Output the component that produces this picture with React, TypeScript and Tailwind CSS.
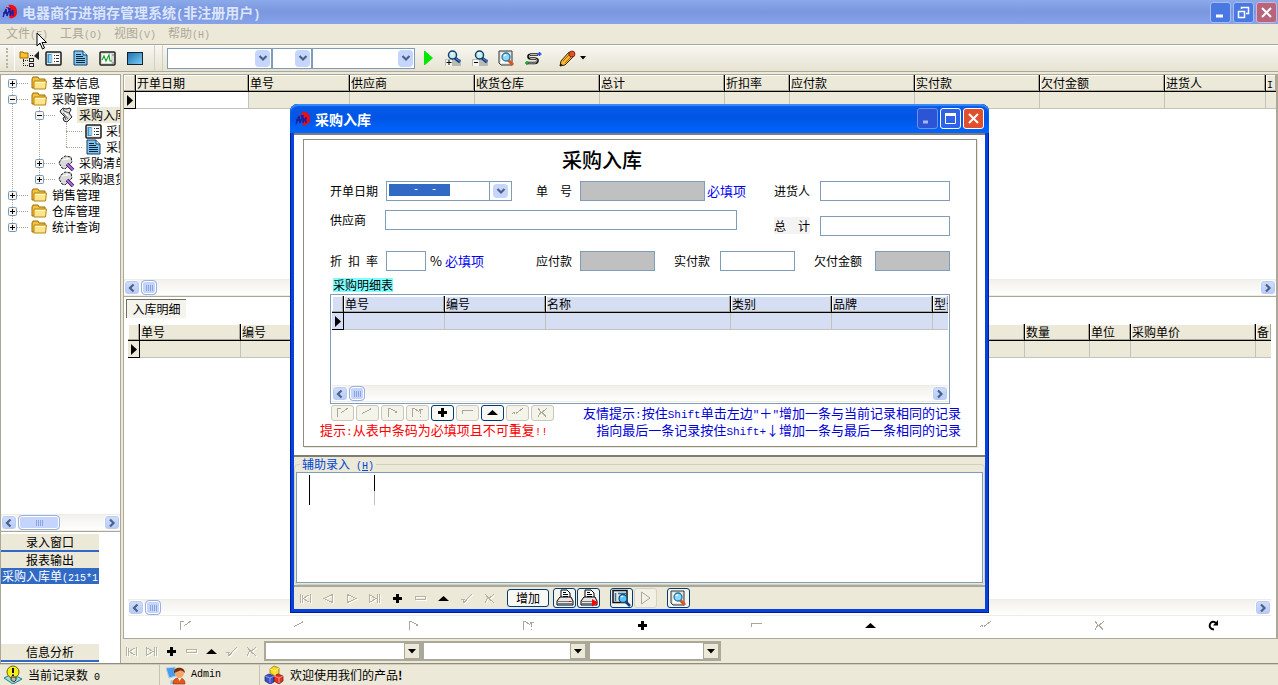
import type { ReactNode } from 'react'

type Column = { label: string; width?: number }
type NavKind = 'first' | 'prev' | 'next' | 'last' | 'add' | 'remove' | 'edit' | 'post' | 'cancel' | 'refresh'

const purchaseColumns: Column[] = [
  { label: '开单日期', width: 113 },
  { label: '单号', width: 101 },
  { label: '供应商', width: 125 },
  { label: '收货仓库', width: 125 },
  { label: '总计', width: 125 },
  { label: '折扣率', width: 65 },
  { label: '应付款', width: 125 },
  { label: '实付款', width: 125 },
  { label: '欠付金额', width: 125 },
  { label: '进货人', width: 101 },
  { label: 'I' },
]

const stockColumns: Column[] = [
  { label: '单号', width: 101 },
  { label: '编号', width: 101 },
  { label: '', width: 683 },
  { label: '数量', width: 65 },
  { label: '单位', width: 41 },
  { label: '采购单价', width: 125 },
  { label: '备' },
]

const detailColumns: Column[] = [
  { label: '单号', width: 101 },
  { label: '编号', width: 101 },
  { label: '名称', width: 185 },
  { label: '类别', width: 101 },
  { label: '品牌', width: 101 },
  { label: '型号' },
]

const navKinds: NavKind[] = ['first', 'prev', 'next', 'last', 'add', 'remove', 'edit', 'post', 'cancel']

const navLabels: Record<NavKind, string> = {
  first: 'First record',
  prev: 'Previous record',
  next: 'Next record',
  last: 'Last record',
  add: 'Insert record',
  remove: 'Delete record',
  edit: 'Edit record',
  post: 'Post edit',
  cancel: 'Cancel edit',
  refresh: 'Refresh',
}

const fullPaths: Record<string, string> = {
  first: 'M1.5 1v9M11.5 1v9M10.5 1.5L4 5.5l6.5 4M3.5 1.5v8',
  prev: 'M10.5 1.5v8L2 5.5z',
  next: 'M2.5 1.5v8L11 5.5z',
  last: 'M1.5 1.5v8L8 5.5zM9.5 1v9M11.5 1v9',
  remove: 'M1.5 3.5h10v3h-10z',
  post: 'M1 6.5h2l1 3L11.5 1.5M4 7l1-1',
  cancel: 'M2 1l3 3.5L2 9.5M11 1L6 5.5l5 4.5M5 4l2 3',
}

const thinPaths: Record<string, string> = {
  first: 'M1.5 9.5v-8h3M5 5.5l2-1 5-3.5',
  prev: 'M1.5 6.5L10.5 1.5',
  next: 'M2.5 9.5v-8h2l6 3.5M9 5.5h2',
  last: 'M1.5 9.5v-8h2l4 3 2-2.5h2M9.5 1.5v5M9.5 8.5v1.5',
  remove: 'M1.5 7v-4h10',
  post: 'M1 6.5l2-1 1 1M5 6.5L12 1',
  cancel: 'M2 1l3 4-3 5M11 1L6 5.5l4 4M7 7h1',
}

// single-width characters take half the advance of a CJK glyph
function Half({ children, size = 'text-[10px]' }: { children: ReactNode; size?: string }) {
  return <span className={`font-['Liberation_Mono',monospace] ${size} leading-none whitespace-pre`}>{children}</span>
}

function NavIcon({ kind, thin }: { kind: NavKind; thin?: boolean }) {
  if (kind === 'add') {
    return (
      <svg width="13" height="11" viewBox="0 0 13 11">
        <path d="M5 1h3v3h3v3H8v3H5V7H2V4h3z" fill="#000" />
      </svg>
    )
  }
  if (kind === 'edit') {
    return (
      <svg width="13" height="11" viewBox="0 0 13 11">
        <path d="M6.5 3L12 8H1z" fill="#000" />
      </svg>
    )
  }
  if (kind === 'refresh') {
    return (
      <svg width="13" height="12" viewBox="0 0 13 12" fill="none">
        <path d="M7 10.5C3 10 2 7.5 3 5s4-3 6-1" stroke="#000" strokeWidth="2" />
        <path d="M11 1v5.5H6z" fill="#000" />
      </svg>
    )
  }
  const d = thin ? thinPaths[kind] : fullPaths[kind]
  return (
    <svg width="13" height="11" viewBox="0 0 13 11" fill="none" shapeRendering="crispEdges">
      {!thin && <path d={d} stroke="#fff" transform="translate(1 1)" />}
      <path d={d} stroke={thin ? '#aca899' : '#b6b2a2'} />
    </svg>
  )
}

function AppIcon() {
  return (
    <svg width="16" height="16" viewBox="0 0 16 16" fill="none">
      <path d="M6 1c6-1 9 2 9 7s-4 7-8 6c3-1 5-4 4-7S8 2 6 1z" fill="#f00a12" />
      <path d="M7 2l4 0 2 5-3 6-3 1 2-6z" fill="#f01018" />
      <path d="M1 13l3-8 1 7 3-8v8l3-6v6M1 9h5M6 4l4 6" stroke="#1b1f9e" strokeWidth="1.4" />
      <path d="M4 3.5h3" stroke="#d02030" />
    </svg>
  )
}

function FormIcon() {
  return (
    <svg width="17" height="15" viewBox="0 0 17 15">
      <rect x="1" y="1" width="15" height="13" rx="1" fill="#e8e8e4" stroke="#1c1c1c" strokeWidth="1.5" />
      <path d="M2.5 3h4v9h-4z" fill="#3d95cf" />
      <path d="M4 4h2v7H4z" fill="#8fd2f5" />
      <path d="M8 3h6.5v9H8z" fill="#fff" />
      <path d="M9 4.5h1M11 4.5h3M9 7.5h1M11 7.5h3M9 10.5h1M11 10.5h3" stroke="#333" />
    </svg>
  )
}

function DocIcon() {
  return (
    <svg width="15" height="16" viewBox="0 0 15 16">
      <path d="M1 1h9l4 4v10H1z" fill="#7cc6f3" stroke="#123c66" />
      <path d="M10 1v4h4" fill="#d4efff" stroke="#123c66" />
      <path d="M3 4.5h5M3 6.5h7M3 8.5h9M3 10.5h9M3 12.5h9" stroke="#14232f" />
    </svg>
  )
}

function TreeIcon() {
  return (
    <svg width="21" height="17" viewBox="0 0 21 17" fill="none">
      <path d="M1 2h3l1 1h4v5H1z" fill="#fbc02d" stroke="#a06a00" />
      <path d="M4.5 9v7M4 10.5h5M11 5.5h3M6 15.5h3" stroke="#222" strokeDasharray="1 1" />
      <rect x="10.5" y="8.5" width="4" height="3" fill="#eee" stroke="#222" />
      <rect x="10.5" y="13.5" width="4" height="3" fill="#eee" stroke="#222" />
      <path d="M20 1l-5 5 5 4z" fill="#222" />
    </svg>
  )
}

function ChartIcon() {
  return (
    <svg width="17" height="15" viewBox="0 0 17 15" fill="none">
      <rect x="1" y="1" width="15" height="13" rx="1" fill="#d8d8d2" stroke="#222" strokeWidth="1.5" />
      <rect x="3" y="3" width="9" height="9" fill="#fff" />
      <path d="M3 9l2-4 2 5 3-6 1 6h2" stroke="#15a52a" strokeWidth="1.2" />
      <path d="M13.5 4h1M13.5 12h1" stroke="#222" />
    </svg>
  )
}

function ScreenIcon() {
  return (
    <svg width="16" height="13" viewBox="0 0 16 13">
      <defs>
        <linearGradient id="screen" x1="0" y1="0" x2="1" y2="1">
          <stop offset="0" stopColor="#1b6fae" />
          <stop offset="1" stopColor="#7fd0f3" />
        </linearGradient>
      </defs>
      <rect x="0.5" y="0.5" width="15" height="12" fill="url(#screen)" stroke="#123" />
    </svg>
  )
}

function ZoomIcon({ minus }: { minus?: boolean }) {
  return (
    <svg width="18" height="17" viewBox="0 0 18 17" fill="none">
      <rect x="1" y="9" width="16" height="7" rx="1" fill="#b9b9b5" />
      <rect x="2" y="10" width="6" height="6" fill="#f5f5f0" />
      <path d={minus ? 'M3 12.5h4' : 'M2.5 12.5h5M5 10v5'} stroke="#000" />
      <path d="M11 8l5 4" stroke="#0c2f66" strokeWidth="3" />
      <path d="M12 8.5l4 3" stroke="#2f86e0" strokeWidth="1.5" />
      <circle cx="8.5" cy="5" r="4" fill="#c6ecfb" stroke="#16415f" strokeWidth="1.5" />
      <path d="M7 4l2-1" stroke="#fff" strokeWidth="1.5" />
    </svg>
  )
}

function PageFindIcon() {
  return (
    <svg width="17" height="17" viewBox="0 0 17 17" fill="none">
      <path d="M1 1h13v14H3l-2-2z" fill="#e4e4e0" stroke="#333" />
      <path d="M3 3h9v10H3z" fill="#fff" />
      <path d="M10 10l5 5" stroke="#d9541e" strokeWidth="3" />
      <circle cx="8" cy="7" r="4" fill="#8fd8f7" stroke="#2277a5" strokeWidth="1.3" />
      <path d="M6 6l2-1.5" stroke="#fff" strokeWidth="1.3" />
    </svg>
  )
}

function RouteIcon() {
  return (
    <svg width="17" height="15" viewBox="0 0 17 15" fill="none">
      <path d="M13 3.500H6C2 4 3 7.500 5.500 7.500H10c4 .5 3 4.500 0 4.500H3" stroke="#111" strokeWidth="2.400" />
      <path d="M12.500 3.500H6C3.500 4 4 7 6 7.500h4c3 .5 2 4 0 4.500H4" stroke="#e8e8e0" strokeWidth=".8" />
      <path d="M12.500 3h4M14.500 1v4" stroke="#1c4fe0" strokeWidth="1.500" />
      <path d="M0 12h4M2 10v4" stroke="#1c9c2c" strokeWidth="1.500" />
    </svg>
  )
}

function PencilIcon() {
  return (
    <svg width="17" height="17" viewBox="0 0 17 17">
      <path d="M1 16l1-5 8-9 5 4-9 9z" fill="#f7b733" stroke="#3a2405" />
      <path d="M4 11l7-7M6 13l7-7" stroke="#b06a08" />
      <path d="M9 3l5 4" stroke="#2e9a4a" strokeWidth="2" />
      <circle cx="13" cy="4" r="3" fill="#ef4a23" stroke="#5b1405" strokeWidth=".7" />
      <path d="M1 16l.6-2.500L3.500 15z" fill="#000" />
    </svg>
  )
}

function FolderIcon() {
  return (
    <svg width="17" height="14" viewBox="0 0 17 14">
      <path d="M1 12V3l1-2h5l1 2h6v9z" fill="#f5c33b" stroke="#9a6d0b" />
      <path d="M3 5h12.500l-1 8H3z" fill="#fde58a" stroke="#b98613" />
      <path d="M4 6.500h10" stroke="#fff7cf" />
    </svg>
  )
}

function ScrollIcon() {
  return (
    <svg width="14" height="16" viewBox="0 0 14 16">
      <path d="M4 1l3 1 4-1 1 2-2 3 3 4-5 5-3-1-1-3 2-1-4-4-1-2z" fill="#dedede" stroke="#222" />
      <path d="M4 1l1 3 5 2M4 6l5 6M6 10l1 3" stroke="#555" fill="none" />
      <path d="M6 6l3 3" stroke="#fff" />
    </svg>
  )
}

function ScrollPenIcon() {
  return (
    <svg width="17" height="16" viewBox="0 0 17 16">
      <path d="M1 8l2-4 4-3 6 1 1 5-2 2-5 5-3-1z" fill="#d9d9d9" stroke="#222" strokeDasharray="3 1" />
      <path d="M4 5l6-1M8 3l4 1" stroke="#fff" />
      <path d="M9 9l6 6" stroke="#32104e" strokeWidth="3.500" />
      <path d="M9 9l6 6" stroke="#b06be0" strokeWidth="1.800" />
    </svg>
  )
}

function PrinterIcon({ direct }: { direct?: boolean }) {
  return (
    <svg width="18" height="18" viewBox="0 0 18 18">
      <path d="M5 9V1h6l3 3v5z" fill="#fff" stroke="#000" />
      <path d="M7 3.500h3M7 5.500h5M7 7.500h5" stroke="#000" />
      <path d="M1 12l3-4h11l2 4v4H1z" fill="#e6e6e6" stroke="#000" />
      <path d="M1 12.500h16M2 14.500h14" stroke="#777" />
      <path d="M13 12.500h2" stroke="#e00" />
      {direct && <path d="M12 10l6 3.500-6 4z" fill="#f00" />}
    </svg>
  )
}

function PreviewIcon() {
  return (
    <svg width="19" height="18" viewBox="0 0 19 18" fill="none">
      <rect x="1" y="1.500" width="14" height="12" fill="#e3e6e8" stroke="#111" strokeWidth="1.500" />
      <path d="M3.500 4v8M6 4.500h8" stroke="#3c6f93" strokeWidth="1.500" />
      <path d="M13 12l5 5" stroke="#0a3e78" strokeWidth="2.500" />
      <circle cx="11" cy="9.500" r="4" fill="#5cc4f5" stroke="#0e4f83" strokeWidth="1.300" />
      <path d="M9 8l2-1" stroke="#fff" strokeWidth="1.300" />
    </svg>
  )
}

function TipIcon() {
  return (
    <svg width="20" height="19" viewBox="0 0 20 19">
      <path d="M1 13l8-4 10 5-9 5z" fill="#9adfe0" stroke="#1b7f83" />
      <circle cx="10" cy="7" r="6" fill="#f6ee1c" stroke="#6d6500" />
      <path d="M8 12h5v3l-2 2-3-2z" fill="#bbb" stroke="#333" />
      <path d="M10 3v5M10 9.500v1.500" stroke="#111" strokeWidth="2" />
    </svg>
  )
}

function UserIcon() {
  return (
    <svg width="20" height="19" viewBox="0 0 20 19">
      <path d="M0 2l9-1 1 9-7 2z" fill="#4d9be6" stroke="#a9d2f7" />
      <path d="M5 14l6 1v3H4z" fill="#9cc8ee" />
      <path d="M7 18c0-5 3-6 6-6s6 1 6 6z" fill="#e8561b" stroke="#8c2b05" strokeWidth=".6" />
      <circle cx="13.500" cy="7" r="4.500" fill="#f0a56a" />
      <path d="M8 7c-1-7 11-7 11 0-2-2-4-3-6-2s-3 1-5 2z" fill="#7a2d08" />
      <path d="M12 12l1.500 3 2-3z" fill="#fff" />
    </svg>
  )
}

function CubesIcon() {
  return (
    <svg width="20" height="19" viewBox="0 0 20 19">
      <path d="M6 4l4-3 5 2v6l-4 2-5-3z" fill="#ffd91a" stroke="#8a6b00" strokeWidth=".7" />
      <path d="M1 11l4-2 5 2v6l-4 2-5-3z" fill="#4050c8" stroke="#101a66" strokeWidth=".7" />
      <path d="M10 11l4-2 5 2v5l-4 3-5-3z" fill="#e03524" stroke="#6e0e05" strokeWidth=".7" />
      <path d="M6 4l5 2 4-3M11 6v5" stroke="#fff3a0" fill="none" strokeWidth=".8" />
      <path d="M1 11l5 2 4-2M6 13v5" stroke="#aab2f5" fill="none" strokeWidth=".8" />
      <path d="M10 11l5 2 4-2M15 13v5" stroke="#ffb0a5" fill="none" strokeWidth=".8" />
    </svg>
  )
}

function Chevron({ dir = 'down' }: { dir?: 'left' | 'right' | 'down' }) {
  const paths = { left: 'M6.500 1.500L3 5l3.500 3.500', right: 'M3 1.500L6.500 5 3 8.500', down: 'M1.500 3L5 6.500 8.500 3' }
  return (
    <svg width="10" height="10" viewBox="0 0 10 10" fill="none">
      <path d={paths[dir]} stroke="#4d6185" strokeWidth="2.200" />
    </svg>
  )
}

function ScrollBar({ thumb = 'w-4' }: { thumb?: string }) {
  const button =
    'w-4 flex items-center justify-center rounded-sm border border-white bg-gradient-to-b from-[#d0defc] to-[#b6caf8] shadow-[0_0_0_1px_#b9cbf3_inset]'
  return (
    <div className="flex h-[17px] shrink-0 border-y border-[#eeede5] bg-gradient-to-b from-[#f2f1ec] to-[#fefefd]">
      <button className={button} aria-label="Scroll left">
        <Chevron dir="left" />
      </button>
      <div
        className={`${thumb} ml-px flex items-center justify-center gap-px rounded-sm border border-[#98b0e4] bg-[#c4d4fb] shadow-[0_0_0_1px_#fff_inset]`}
      >
        <i className="h-1.5 w-px bg-[#8ca5de]" />
        <i className="h-1.5 w-px bg-[#8ca5de]" />
        <i className="h-1.5 w-px bg-[#8ca5de]" />
        <i className="h-1.5 w-px bg-[#8ca5de]" />
      </div>
      <button className={`${button} ml-auto`} aria-label="Scroll right">
        <Chevron dir="right" />
      </button>
    </div>
  )
}

function DataGrid({ columns, blue, firstWhite }: { columns: Column[]; blue?: boolean; firstWhite?: boolean }) {
  const tone = blue ? 'bg-[#d6def4]' : 'bg-[#ece9d8]'
  const head = `${tone} h-[17px] overflow-hidden border-r border-b border-black p-0 pl-px text-left font-normal whitespace-nowrap shadow-[inset_-1px_-1px_0_#aca899,inset_1px_1px_0_#fff]`
  return (
    <table className="w-full table-fixed border-separate border-spacing-0 text-xs leading-4">
      <colgroup>
        <col className="w-3" />
        {columns.map((c, i) => (
          <col key={i} style={{ width: c.width }} />
        ))}
      </colgroup>
      <thead>
        <tr>
          <th className={head} />
          {columns.map((c, i) => (
            <th key={i} className={`${head} last:border-r-0`}>
              {c.label === 'I' ? <Half>I</Half> : c.label}
            </th>
          ))}
        </tr>
      </thead>
      <tbody>
        <tr>
          <td className={`${tone} h-[17px] border-r border-b border-black p-0`}>
            <svg width="11" height="15" viewBox="0 0 11 15">
              <path d="M3 2l6 5.500L3 13z" fill="#000" />
            </svg>
          </td>
          {columns.map((c, i) => (
            <td
              key={i}
              className={`${firstWhite && i === 0 ? 'bg-white' : tone} border-r border-b border-[#c3c2bb] p-0 last:border-r-0`}
            />
          ))}
        </tr>
      </tbody>
    </table>
  )
}

function Combo({ label, width }: { label: string; width: string }) {
  return (
    <div className={`relative ${width} h-[21px] border border-[#7f9db9] bg-white`}>
      <select aria-label={label} className="h-full w-full appearance-none text-xs outline-none" />
      <span className="pointer-events-none absolute top-px right-px flex h-[17px] w-[15px] items-center justify-center rounded-sm bg-[#c5d5fb]">
        <Chevron />
      </span>
    </div>
  )
}

function FlatCombo({ label, width }: { label: string; width: string }) {
  return (
    <div className={`relative ${width} h-5 border-2 border-[#aca899] bg-white`}>
      <select aria-label={label} className="h-full w-full appearance-none text-xs outline-none" />
      <span className="pointer-events-none absolute top-0 right-0 flex h-4 w-4 items-center justify-center border border-[#aca899] bg-[#ece9d8]">
        <svg width="8" height="5" viewBox="0 0 8 5">
          <path d="M0 0h8L4 4.500z" fill="#000" />
        </svg>
      </span>
    </div>
  )
}

function ToolButton({ label, className, children }: { label: string; className: string; children: ReactNode }) {
  return (
    <button aria-label={label} className={`flex h-5 shrink-0 items-center justify-center ${className}`}>
      {children}
    </button>
  )
}

function Expander({ open }: { open?: boolean }) {
  return (
    <svg width="9" height="9" viewBox="0 0 9 9" className="shrink-0">
      <rect x="0.5" y="0.5" width="8" height="8" rx="1" fill="#f4f3ee" stroke="#7898b5" />
      <path d={open ? 'M2 4.5h5' : 'M2 4.5h5M4.5 2v5'} stroke="#000" />
    </svg>
  )
}

function TreeRow(props: { level: number; icon: ReactNode; label: string; open?: boolean; leaf?: boolean; active?: boolean }) {
  const { level, icon, label, open, leaf, active } = props
  return (
    <li className="flex h-4 items-center whitespace-nowrap">
      {level > 0 && <span className={`shrink-0 ${level === 1 ? 'w-[27px]' : 'w-[58px]'}`} />}
      {leaf ? null : <Expander open={open} />}
      <span className={`h-px shrink-0 border-t border-dotted border-[#aca899] ${leaf ? 'w-4' : 'w-[11px]'}`} />
      <span className="flex w-[22px] shrink-0 items-center justify-center">{icon}</span>
      <span className={`min-w-0 flex-1 overflow-hidden pl-0.5 leading-4 ${active ? 'bg-[#ece9d8]' : ''}`}>{label}</span>
    </li>
  )
}

function Sidebar() {
  return (
    <aside className="flex w-[121px] shrink-0 flex-col overflow-hidden border-t border-r border-l border-[#aca899] bg-white">
      <ul className="relative isolate flex-1 pl-[7px]">
        <i className="absolute top-2 left-[11px] -z-10 h-36 border-l border-dotted border-[#aca899]" />
        <i className="absolute top-8 left-[38px] -z-10 h-[72px] border-l border-dotted border-[#aca899]" />
        <i className="absolute top-12 left-[65px] -z-10 h-6 border-l border-dotted border-[#aca899]" />
        <TreeRow level={0} icon={<FolderIcon />} label="基本信息" />
        <TreeRow level={0} icon={<FolderIcon />} label="采购管理" open />
        <TreeRow level={1} icon={<ScrollIcon />} label="采购入库" open active />
        <TreeRow level={2} icon={<FormIcon />} label="采购" leaf />
        <TreeRow level={2} icon={<DocIcon />} label="采购" leaf />
        <TreeRow level={1} icon={<ScrollPenIcon />} label="采购清单" />
        <TreeRow level={1} icon={<ScrollPenIcon />} label="采购退货" />
        <TreeRow level={0} icon={<FolderIcon />} label="销售管理" />
        <TreeRow level={0} icon={<FolderIcon />} label="仓库管理" />
        <TreeRow level={0} icon={<FolderIcon />} label="统计查询" />
      </ul>
      <ScrollBar thumb="w-[42px]" />
      <div className="flex h-[132px] w-full flex-col border-t border-[#aca899] pt-0.5 pb-px">
        <button className="h-[18px] w-[98px] border-b-2 border-[#316ac5] bg-[#ece9d8] leading-4">录入窗口</button>
        <button className="h-4 w-[98px] bg-[#ece9d8] leading-4">报表输出</button>
        <button className="h-4 w-[98px] overflow-hidden bg-[#316ac5] pl-px text-left leading-4 whitespace-nowrap text-white">
          采购入库单<Half>(215*1</Half>
        </button>
        <button className="mt-auto h-[18px] w-[98px] border-b-2 border-[#316ac5] bg-[#ece9d8] leading-4">信息分析</button>
      </div>
    </aside>
  )
}

function Field({ id, className, readOnly }: { id: string; className: string; readOnly?: boolean }) {
  return (
    <input
      id={id}
      readOnly={readOnly}
      className={`h-5 border border-[#7f9db9] px-1 outline-none ${readOnly ? 'bg-[#c0c0c0]' : 'bg-white'} ${className}`}
    />
  )
}

function WindowButton({ label, tone, children }: { label: string; tone: string; children: ReactNode }) {
  return (
    <button aria-label={label} className={`flex h-[21px] w-[21px] items-center justify-center rounded-[3px] border ${tone}`}>
      <svg width="15" height="15" viewBox="0 0 15 15" fill="none" stroke="#fff" strokeWidth="2">
        {children}
      </svg>
    </button>
  )
}

function EntryForm() {
  return (
    <div className="mt-1 mr-2 ml-[9px] border border-[#908e80] bg-white shadow-[1px_1px_0_#ece9d8]">
      <h1 className="mt-2 pl-[258px] text-xl leading-6 font-medium">采购入库</h1>
      <div className="mt-[9px] flex justify-between px-[26px]">
        <div className="flex flex-col gap-[9px]">
          <div className="flex items-center">
            <label htmlFor="date" className="w-14">开单日期</label>
            <div className="flex h-5 w-[126px] border border-[#7f9db9]">
              <input
                id="date"
                readOnly
                value={'    -  -'}
                className="my-0.5 ml-0.5 h-3 w-[61px] bg-[#316ac5] font-['Liberation_Mono',monospace] text-[10px] leading-3 text-white outline-none"
              />
              <button aria-label="Pick date" className="ml-auto flex w-[22px] items-center justify-center border-l border-[#7f9db9]">
                <span className="flex h-3.5 w-[15px] items-center justify-center rounded-sm bg-[#c5d5fb]">
                  <Chevron />
                </span>
              </button>
            </div>
            <label htmlFor="number" className="ml-6 w-11">单　号</label>
            <Field id="number" className="w-[125px]" readOnly />
            <span className="ml-0.5 text-[13px] text-[#0000f0]">必填项</span>
          </div>
          <div className="flex items-center">
            <label htmlFor="supplier" className="w-[55px]">供应商</label>
            <Field id="supplier" className="w-[352px]" />
          </div>
        </div>
        <div className="flex w-[176px] flex-col gap-[15px]">
          <div className="flex items-center">
            <label htmlFor="buyer" className="w-[46px]">进货人</label>
            <Field id="buyer" className="w-[130px]" />
          </div>
          <div className="flex items-center">
            <label htmlFor="total" className="w-[46px]">
              <span className="bg-[#f3f3f3]">总　计</span>
            </label>
            <Field id="total" className="w-[130px]" />
          </div>
        </div>
      </div>
      <div className="mt-[15px] flex items-center px-[26px]">
        <label htmlFor="discount" className="w-14">折&ensp;扣&ensp;率</label>
        <Field id="discount" className="w-10" />
        <span className="ml-1 w-[15px] text-[13px]">%</span>
        <span className="w-[91px] text-[13px] text-[#0000f0]">必填项</span>
        <label htmlFor="payable" className="w-11">应付款</label>
        <Field id="payable" className="w-[75px]" readOnly />
        <label htmlFor="paid" className="ml-[19px] w-[46px]">实付款</label>
        <Field id="paid" className="w-[75px]" />
        <label htmlFor="owed" className="ml-[19px] w-[61px]">欠付金额</label>
        <Field id="owed" className="w-[75px]" readOnly />
      </div>
      <div className="mt-[7px] ml-[29px] flex">
        <span className="bg-[#80ffff] leading-[14px]">采购明细表</span>
      </div>
      <div className="mx-[26px] mt-0.5 flex h-[110px] flex-col justify-between overflow-hidden border border-[#7f9db9] p-px">
        <DataGrid columns={detailColumns} blue />
        <ScrollBar />
      </div>
      <div className="mb-2 pr-[15px] pl-4 text-[13px] leading-[17px]">
        <div className="flex h-[17px] items-center justify-between">
          <div className="ml-[11px] flex gap-0.5">
            {navKinds.map((kind) => {
              const on = kind === 'add' || kind === 'edit'
              return (
                <button
                  key={kind}
                  aria-label={navLabels[kind]}
                  disabled={!on}
                  className={`flex h-4 w-[23px] items-center justify-center rounded-[3px] border ${on ? 'border-[#003c74] bg-[#f8f8f4]' : 'border-[#c9c7ba] bg-[#f5f4ea]'}`}
                >
                  <NavIcon kind={kind} thin />
                </button>
              )
            })}
          </div>
          <p className="whitespace-nowrap text-[#0000d8]">
            友情提示<Half size="text-[11px]">:</Half>按住<Half size="text-[11px]">Shift</Half>单击左边
            <Half size="text-[11px]">"</Half>＋<Half size="text-[11px]">"</Half>增加一条与当前记录相同的记录
          </p>
        </div>
        <div className="flex h-[17px] items-center justify-between">
          <p className="text-[#f00]">
            提示<Half size="text-[11px]">:</Half>从表中条码为必填项且不可重复<Half size="text-[11px]">!!</Half>
          </p>
          <p className="whitespace-nowrap text-[#0000d8]">
            指向最后一条记录按住<Half size="text-[11px]">Shift+</Half>↓增加一条与最后一条相同的记录
          </p>
        </div>
      </div>
    </div>
  )
}

function PurchaseDialog() {
  const framed = 'flex h-5 w-[23px] items-center justify-center rounded-[3px] border border-[#003c74] bg-[#f4f3ec]'
  return (
    <section
      role="dialog"
      aria-label="采购入库"
      className="absolute top-[104px] left-[290px] flex w-[699px] flex-col rounded-t-lg bg-[#0842dc] px-1 pb-1 shadow-[inset_0_0_0_1px_#001ea0]"
    >
      <header className="-mx-1 flex h-[29px] items-center gap-1 rounded-t-lg bg-gradient-to-b from-[#0a5ae8] via-[#0055e5] to-[#0066ff] pr-[5px] pl-[5px] shadow-[inset_0_2px_1px_#3a8bf8]">
        <AppIcon />
        <h2 className="flex-1 text-sm leading-5 font-bold text-white">采购入库</h2>
        <div className="flex gap-0.5">
          <WindowButton label="Minimize" tone="border-[#6f8fe8] bg-[#2c55d6]">
            <path d="M3 11h5" stroke="#a9b9ef" strokeWidth="3" />
          </WindowButton>
          <WindowButton label="Maximize" tone="border-white bg-[#2f62e4]">
            <path d="M2.5 3.5h10v9h-10z" strokeWidth="1" />
            <path d="M2 3.5h11" strokeWidth="3" />
          </WindowButton>
          <WindowButton label="Close" tone="border-white bg-[#e0502c]">
            <path d="M3 3l9 9M12 3l-9 9" />
          </WindowButton>
        </div>
      </header>
      <div className="border-t-2 border-b-2 border-[#7f7d74] bg-white pb-2">
        <EntryForm />
      </div>
      <div className="bg-[#ece9d8]">
        <fieldset className="rounded border border-[#d0d0bf] px-px pb-px">
          <legend className="ml-1 h-[14px] px-0.5 leading-[14px] text-[#0046d5]">
            <label htmlFor="helper">
              辅助录入<Half> (<u>H</u>)</Half>
            </label>
          </legend>
          <div className="relative pt-px">
            <textarea id="helper" className="block h-[111px] w-full resize-none border border-[#7f9db9] bg-white p-1 outline-none" />
            <i className="absolute top-1 left-[13px] h-[30px] w-px bg-black" />
            <i className="absolute top-1 left-[78px] h-4 w-px bg-black" />
            <i className="absolute top-5 left-[78px] h-3.5 w-px bg-[#c0c0c0]" />
          </div>
        </fieldset>
        <div className="flex h-6 items-center border-t-2 border-[#aca899]">
          {navKinds.map((kind) => (
            <button key={kind} aria-label={navLabels[kind]} className="flex h-5 w-[23px] items-center justify-center">
              <NavIcon kind={kind} />
            </button>
          ))}
          <button className="ml-1.5 h-[18px] w-[42px] rounded-[3px] border border-[#003c74] bg-[#f8f8f4] leading-4">增加</button>
          <button aria-label="Print" className={`${framed} ml-1`}>
            <PrinterIcon />
          </button>
          <button aria-label="Print now" className={`${framed} ml-px`}>
            <PrinterIcon direct />
          </button>
          <button aria-label="Preview" className={`${framed} ml-[10px]`}>
            <PreviewIcon />
          </button>
          <button
            aria-label="Run"
            disabled
            className="ml-px flex h-5 w-[23px] items-center justify-center rounded-[3px] border border-[#d5d2c3] bg-[#f2f0e5]"
          >
            <svg width="11" height="14" viewBox="0 0 11 14">
              <path d="M1.5 1v12L10 7z" fill="none" stroke="#aca899" />
            </svg>
          </button>
          <button aria-label="Find" className={`${framed} ml-[10px]`}>
            <PageFindIcon />
          </button>
        </div>
      </div>
    </section>
  )
}

export default function App() {
  return (
    <div className="relative flex h-screen flex-col overflow-hidden bg-[#ece9d8] font-['Noto_Sans_CJK_SC',sans-serif] text-xs leading-4 text-black">
      <header className="flex h-6 shrink-0 items-center bg-gradient-to-b from-[#8ba9ea] via-[#7a96df] to-[#86a3ea] pr-px pl-0.5">
        <AppIcon />
        <h1 className="ml-1 flex-1 text-sm leading-5 font-bold text-[#dbe5fb]">
          电器商行进销存管理系统<Half size="text-xs">(</Half>非注册用户<Half size="text-xs">)</Half>
        </h1>
        <div className="flex gap-0.5">
          <WindowButton label="Minimize" tone="border-[#a5bdf3] bg-[#4a78e2]">
            <path d="M3 11h7" strokeWidth="3" />
          </WindowButton>
          <WindowButton label="Restore" tone="border-[#a5bdf3] bg-[#4a78e2]">
            <path d="M5.5 4V2.5h7v6H10M2.5 6.5h6v6h-6z" strokeWidth="1.5" />
          </WindowButton>
          <WindowButton label="Close" tone="border-[#d5b5cc] bg-[#b8647a]">
            <path d="M3 3l9 9M12 3l-9 9" />
          </WindowButton>
        </div>
      </header>

      <nav className="flex h-5 shrink-0 items-center gap-3 pb-0.5 pl-1.5 whitespace-nowrap text-[#aca899]">
        <button className="w-[42px] text-left">文件<Half>(F)</Half></button>
        <button className="w-[42px] text-left">工具<Half>(O)</Half></button>
        <button className="w-[42px] text-left">视图<Half>(V)</Half></button>
        <button className="w-[42px] text-left">帮助<Half>(H)</Half></button>
      </nav>

      <div className="flex h-7 shrink-0 items-center border-t border-b border-[#aca899] bg-gradient-to-b from-[#f8f7f2] to-[#e6e3d2] pl-1.5 shadow-[inset_0_1px_0_#fff]">
        <i className="h-5 border-l-2 border-dotted border-[#b5b2a0]" />
        <i className="ml-1.5 h-full w-px bg-white" />
        <ToolButton label="Tree" className="ml-[3px] w-[22px]"><TreeIcon /></ToolButton>
        <ToolButton label="Form" className="w-[27px]"><FormIcon /></ToolButton>
        <ToolButton label="Report" className="w-[27px]"><DocIcon /></ToolButton>
        <ToolButton label="Chart" className="w-[27px]"><ChartIcon /></ToolButton>
        <ToolButton label="Screen" className="w-[27px]"><ScreenIcon /></ToolButton>
        <i className="ml-1.5 h-full w-px bg-[#d3d0bf]" />
        <i className="ml-[7px] h-full w-px bg-[#d3d0bf]" />
        <div className="ml-1 flex">
          <Combo label="Field" width="w-[105px]" />
          <Combo label="Operator" width="w-10" />
          <Combo label="Value" width="w-[103px]" />
        </div>
        <ToolButton label="Run" className="ml-0.5 w-[22px]">
          <svg width="9" height="14" viewBox="0 0 9 14">
            <path d="M0 0h1l8 7-8 7H0z" fill="#00e800" />
          </svg>
        </ToolButton>
        <ToolButton label="Zoom in" className="w-[27px]"><ZoomIcon /></ToolButton>
        <ToolButton label="Zoom out" className="w-[27px]"><ZoomIcon minus /></ToolButton>
        <ToolButton label="Find" className="w-[27px]"><PageFindIcon /></ToolButton>
        <ToolButton label="Route" className="w-[27px]"><RouteIcon /></ToolButton>
        <ToolButton label="Edit" className="ml-1.5 w-[38px] gap-1">
          <PencilIcon />
          <svg width="6" height="4" viewBox="0 0 6 4">
            <path d="M0 0h6L3 3.5z" fill="#000" />
          </svg>
        </ToolButton>
      </div>

      <div className="mt-0.5 flex min-h-0 flex-1">
        <Sidebar />
        <main className="flex min-w-0 flex-1 flex-col">
          <div className="ml-0.5 flex min-h-0 flex-1 flex-col border-t border-r-2 border-b border-l border-[#aca899] bg-white">
            <div className="flex h-[222px] shrink-0 flex-col justify-between overflow-hidden border-b border-[#aca899]">
              <DataGrid columns={purchaseColumns} firstWhite />
              <ScrollBar />
            </div>
            <button className="mt-0.5 ml-0.5 h-[19px] w-[60px] shrink-0 border-t border-l border-[#716f64] bg-[#f5f4ec]">入库明细</button>
            <div className="mt-1.5 mr-[5px] ml-1 flex flex-1 flex-col justify-between overflow-hidden">
              <DataGrid columns={stockColumns} />
              <ScrollBar />
            </div>
            <div className="mr-[5px] ml-1 grid h-[22px] shrink-0 grid-cols-10 items-center pb-1">
              {[...navKinds, 'refresh' as const].map((kind) => (
                <button key={kind} aria-label={navLabels[kind]} className="flex items-center justify-center">
                  <NavIcon kind={kind} thin />
                </button>
              ))}
            </div>
          </div>
          <div className="flex h-6 shrink-0 items-center">
            {navKinds
              .filter((kind) => kind !== 'prev' && kind !== 'next')
              .map((kind) => (
                <button key={kind} aria-label={navLabels[kind]} className="flex h-5 w-5 items-center justify-center">
                  <NavIcon kind={kind} />
                </button>
              ))}
            <div className="ml-[3px] flex">
              <FlatCombo label="Table" width="w-[158px]" />
              <FlatCombo label="Column" width="w-[166px]" />
              <FlatCombo label="Filter" width="w-[133px]" />
            </div>
          </div>
        </main>
      </div>

      <footer className="flex h-[22px] shrink-0 items-center border-t border-[#8f8d80] shadow-[inset_0_1px_0_#d0cdbc]">
        <div className="flex h-full w-40 items-center gap-[5px] border-r border-[#c5c2b0] pl-[3px]">
          <TipIcon />
          <span>当前记录数<Half> 0</Half></span>
        </div>
        <div className="flex h-full w-[100px] items-center gap-[5px] border-r border-[#c5c2b0] pt-px pl-1.5">
          <UserIcon />
          <Half>Admin</Half>
        </div>
        <div className="flex h-full items-center gap-1.5 pl-1">
          <CubesIcon />
          <span>欢迎使用我们的产品<b>!</b></span>
        </div>
      </footer>

      <PurchaseDialog />

      <svg className="pointer-events-none absolute top-8 left-9" width="12" height="19" viewBox="0 0 12 19">
        <path d="M1 1v13l3-3 2.5 6 2-1L6 10.5h4.5z" fill="#fff" stroke="#000" />
      </svg>
    </div>
  )
}
